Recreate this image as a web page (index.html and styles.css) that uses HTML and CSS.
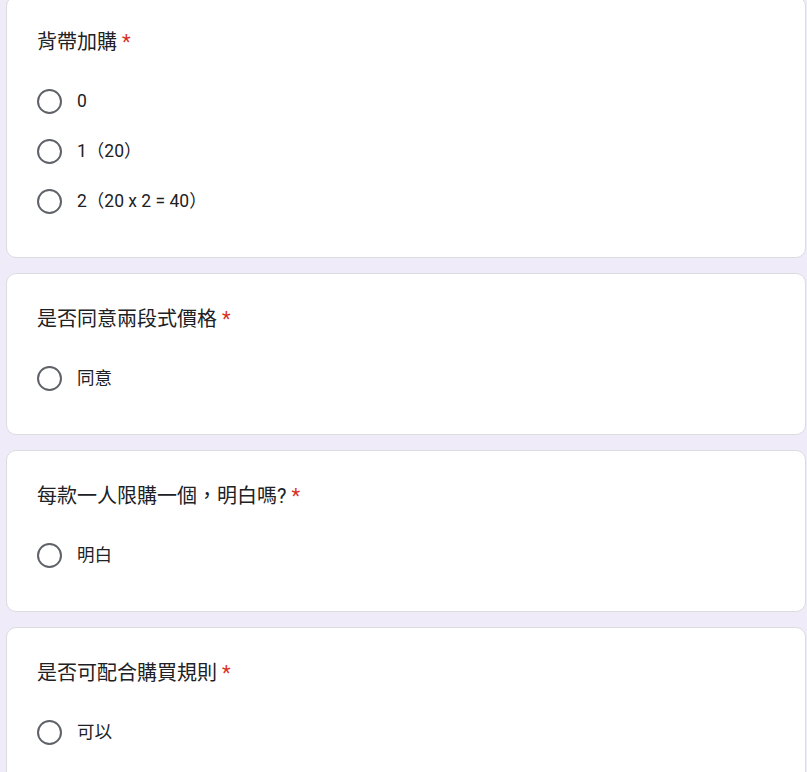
FILE: index.html
```html
<!DOCTYPE html>
<html lang="zh-Hant">
<head>
<meta charset="utf-8">
<title>Form</title>
<link rel="stylesheet" href="styles.css">
</head>
<body>
<div class="form">
  <section class="card">
    <div class="title">背帶加購 <span class="req">*</span></div>
    <div class="options">
      <label class="opt"><span class="radio"></span><span class="label">0</span></label>
      <label class="opt"><span class="radio"></span><span class="label">1（20）</span></label>
      <label class="opt"><span class="radio"></span><span class="label">2（20 x 2 = 40）</span></label>
    </div>
  </section>
  <section class="card">
    <div class="title">是否同意兩段式價格 <span class="req">*</span></div>
    <div class="options">
      <label class="opt"><span class="radio"></span><span class="label">同意</span></label>
    </div>
  </section>
  <section class="card">
    <div class="title">每款一人限購一個，明白嗎? <span class="req">*</span></div>
    <div class="options">
      <label class="opt"><span class="radio"></span><span class="label">明白</span></label>
    </div>
  </section>
  <section class="card">
    <div class="title">是否可配合購買規則 <span class="req">*</span></div>
    <div class="options">
      <label class="opt"><span class="radio"></span><span class="label">可以</span></label>
    </div>
  </section>
</div>
</body>
</html>
```

FILE: styles.css
```css
html, body {
  margin: 0;
  padding: 0;
  background: #f0ebf8;
  overflow: hidden;
}
body {
  font-family: Roboto, "Noto Sans CJK TC", sans-serif;
  color: #202124;
}
.form {
  display: flex;
  flex-direction: column;
  gap: 15px;
  margin-top: -4px;
  margin-left: 6px;
  width: 800px;
}
.card {
  box-sizing: border-box;
  background: #fff;
  border: 1px solid #dadce0;
  border-radius: 10px;
  padding: 30px 30px 31px 30px;
}
.title {
  font-size: 20px;
  line-height: 30px;
  letter-spacing: 0;
}
.req {
  color: #d93025;
}
.options {
  margin-top: 19px;
  display: flex;
  flex-direction: column;
}
.opt {
  display: flex;
  align-items: center;
  height: 50px;
}
.radio {
  box-sizing: border-box;
  width: 25px;
  height: 25px;
  border: 2.5px solid #5f6368;
  border-radius: 50%;
  flex: none;
}
.label {
  margin-left: 15px;
  font-size: 17.5px;
  line-height: 25px;
}
```
